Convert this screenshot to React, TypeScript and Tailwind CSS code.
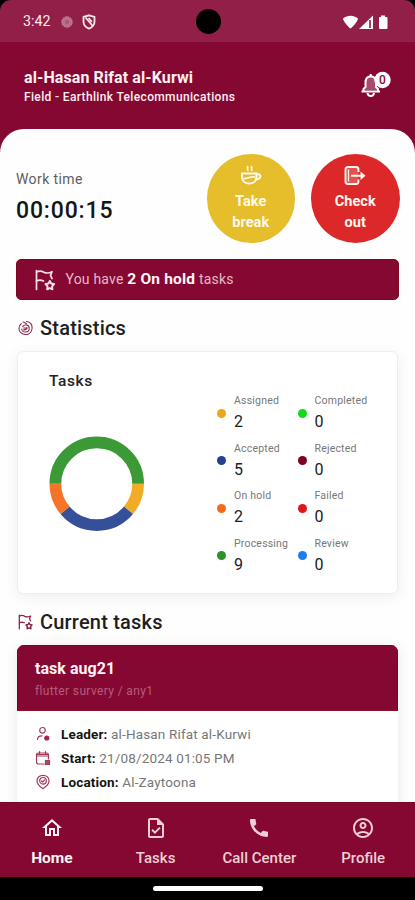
// src/App.tsx
import type { ReactNode } from 'react'
import {
  MdCall,
  MdOutlineAccountCircle,
  MdOutlineHome,
  MdOutlineTask,
} from 'react-icons/md'

const stats = [
  { label: 'Assigned', value: 2, color: '#eca51f' },
  { label: 'Completed', value: 0, color: '#12d81f' },
  { label: 'Accepted', value: 5, color: '#24428f' },
  { label: 'Rejected', value: 0, color: '#7d0320' },
  { label: 'On hold', value: 2, color: '#f26c1c' },
  { label: 'Failed', value: 0, color: '#e01619' },
  { label: 'Processing', value: 9, color: '#2a9228' },
  { label: 'Review', value: 0, color: '#1c7ff0' },
]

// clockwise from the right hand side
const slices = [
  { value: 2, color: '#f0ab27' },
  { value: 5, color: '#364f99' },
  { value: 2, color: '#f4752a' },
  { value: 9, color: '#3c9a36' },
]

const tabs = [
  { label: 'Home', icon: MdOutlineHome, active: true },
  { label: 'Tasks', icon: MdOutlineTask, active: false },
  { label: 'Call Center', icon: MdCall, active: false },
  { label: 'Profile', icon: MdOutlineAccountCircle, active: false },
]

function FlagStarIcon({ className }: { className?: string }) {
  return (
    <svg viewBox="0 0 20 22" fill="none" stroke="currentColor" strokeWidth="1.7" strokeLinejoin="round" strokeLinecap="round" className={className}>
      <path d="M1.5 20.5V1.5" />
      <path d="M1.5 3C4 1.6 6.5 1.8 9 3.2C11.5 4.5 14 4.2 17 2.7L15.5 6.5L17 9.5" />
      <path d="M1.5 12C4 10.6 6 10.7 8.5 12" />
      <path d="M14.8 12L16.100 14.4L19 15L17.100 17.3L17.400 20.3L14.800 19.1L12.200 20.3L12.500 17.300L10.600 15L13.500 14.4Z" strokeWidth="2" />
    </svg>
  )
}

function StatusBar() {
  return (
    <div className="relative bg-black">
      <div className="flex h-[42px] items-center rounded-t-[11px] bg-[#921f48] pl-[23px] pr-[27px] pt-[2px] text-[#fbe9ee]">
        <span className="text-[14.2px]">3:42</span>
        <svg viewBox="0 0 14 14" className="ml-[10px] h-[14px] w-[14px]">
          <circle cx="7" cy="7" r="5.3" fill="#b8708a" />
          <circle cx="7" cy="7" r="5.3" fill="none" stroke="#c98fa3" strokeDasharray="1.5 1" />
          <circle cx="7" cy="7" r="2" fill="#a8557a" />
        </svg>
        <svg viewBox="0 0 14 16" fill="none" stroke="currentColor" strokeWidth="1.8" className="ml-[8px] h-[16px] w-[14px]">
          <path d="M7 1.3L12.5 3V7.5C12.5 11 10 13.5 7 14.6C4 13.5 1.5 11 1.5 7.5V3Z" />
          <path d="M3.5 3.500L10.800 12" />
          <path d="M6.500 4L9.800 7.800" />
        </svg>
        <svg viewBox="0 0 46 15" fill="#fff" className="ml-auto h-[15px] w-[46px]">
          <path d="M1 3.500C5.500 -.3 11.500 -.3 16 3.500C16 5.500 11 12 8.500 13.500C6 12 1 5.500 1 3.500Z" />
          <path d="M31 .5V14H17Z" />
          <path d="M27 5H29V13H27Z" fill="#a04265" />
          <path d="M39 .5H43V2H44.500Q45.500 2 45.500 3V13Q45.500 14 44.500 14H38Q37 14 37 13V3Q37 2 38 2H39Z" />
        </svg>
      </div>
      <div className="absolute left-[195.5px] top-[9px] h-[25px] w-[25px] rounded-full bg-black" />
    </div>
  )
}

function Header() {
  return (
    <header className="flex h-[87px] justify-between pl-6 pr-[24px] pt-[25px] text-[#fdeef1]">
      <div>
        <h1 className="text-[16px] leading-[21px] font-bold tracking-[0.1px]">al-Hasan Rifat al-Kurwi</h1>
        <p className="text-[12px] leading-[19px] font-medium tracking-[0.35px]">Field - Earthlink Telecommunications</p>
      </div>
      <svg viewBox="0 0 32 30" className="mt-[2px] h-[30px] w-[32px]" fill="none" stroke="#fff">
        <path d="M6.5 18V13.5C6.5 10 8.3 7.5 11.7 7.2C15 7.5 17 10 17 13.5V18L19 21H4.5Z" fill="#a84a6c" stroke="none" />
        <path d="M2.500 22.500H21M4.500 22V20L6.500 18V13.5C6.5 10 8.3 7.5 11.7 7.2C15 7.5 17 10 17 13.500V18L19 20V22" strokeWidth="2" />
        <path d="M11.700 5V7.500M8.500 24C9 28 14.500 28 15 24" strokeWidth="2" />
        <circle cx="23.500" cy="11" r="8.200" fill="#fff" stroke="none" />
        <text x="23.500" y="15.300" textAnchor="middle" fontSize="12" fontWeight="500" fill="#850832" stroke="none">0</text>
      </svg>
    </header>
  )
}

function RoundButton({ className, icon, children }: { className: string; icon: ReactNode; children: ReactNode }) {
  return (
    <button className={`flex h-[89px] w-[88.5px] flex-col items-center rounded-full pt-[11px] text-center text-[14.5px] leading-[21px] font-bold tracking-[0.1px] text-[#fff8ee] ${className}`}>
      {icon}
      <span className="mt-[4px]">{children}</span>
    </button>
  )
}

function WorkTime() {
  return (
    <section className="flex justify-between">
      <div className="pt-[15px]">
        <p className="text-[14px] leading-[20px] tracking-[0.4px] text-[#5d5d5d]">Work time</p>
        <p className="mt-[6px] text-[23px] leading-[32px] font-medium tracking-[0.85px] text-[#151515]">00:00:15</p>
      </div>
      <div className="-mr-[0.5px] flex gap-4">
        <RoundButton
          className="bg-[#e6bd2a]"
          icon={
            <svg viewBox="0 0 22 22" fill="none" stroke="currentColor" strokeWidth="2" strokeLinecap="round" className="h-[22px] w-[22px]">
              <path d="M2 8.500H16.500V12C16.500 16 13.500 18.500 9.300 18.500S2 16 2 12Z" />
              <path d="M16.500 9.500C22 8 21.500 14 16 14.500" />
              <path d="M4 13.500C7 14.500 10 11 14.500 12" strokeWidth="1.600" />
              <path d="M8 5.500C6.500 4 8.500 3.500 7.500 1.500M12 5.500C10.500 4 12.500 3.500 11.500 1.500" strokeWidth="1.600" />
            </svg>
          }
        >
          Take<br />break
        </RoundButton>
        <RoundButton
          className="bg-[#dc2828]"
          icon={
            <svg viewBox="0 0 22 22" fill="none" stroke="currentColor" strokeWidth="1.9" className="h-[22px] w-[22px]">
              <path d="M14.500 7V4.500Q14.500 2 12 2H4Q1.500 2 1.500 4.500V16.500Q1.500 19 4 19H12Q14.500 19 14.500 16.500V14.500" fill="currentColor" fillOpacity="0.2" />
              <path d="M4.500 4.500V16.500" strokeWidth="1.300" />
              <path d="M7 10.700H18" />
              <path d="M16.500 6.500L21.500 10.700L16.500 14.900Z" fill="currentColor" stroke="none" />
            </svg>
          }
        >
          Check<br />out
        </RoundButton>
      </div>
    </section>
  )
}

function SectionTitle({ icon, children }: { icon: ReactNode; children: ReactNode }) {
  return (
    <div className="flex items-center gap-[7px] pl-[2px] text-[#8e2045]">
      {icon}
      <h2 className="text-[20px] leading-[24px] font-medium tracking-[0.2px] text-[#1c1f22]">{children}</h2>
    </div>
  )
}

function Donut() {
  const total = slices.reduce((sum, s) => sum + s.value, 0)
  let start = 0
  return (
    <svg viewBox="0 0 96 96" className="h-[95.5px] w-[95.5px]" fill="none" strokeWidth="11.8">
      {slices.map((s, i) => {
        const offset = start
        start += s.value
        return (
          <circle
            key={i}
            cx="48"
            cy="48"
            r="41.6"
            stroke={s.color}
            pathLength={total}
            strokeDasharray={`${s.value} ${total - s.value}`}
            strokeDashoffset={-offset}
          />
        )
      })}
    </svg>
  )
}

function StatisticsCard() {
  return (
    <section className="mx-px flex h-[243px] rounded-[6px] border border-[#eceeef] bg-white shadow-[0_3px_14px_rgba(60,80,90,0.09)]">
      <div className="w-[199px] pl-[31px] pt-[18px]">
        <h3 className="text-[15.5px] leading-[22px] font-medium tracking-[0.6px] text-[#222]">Tasks</h3>
        <div className="mt-[44px]">
          <Donut />
        </div>
      </div>
      <div className="grid h-[231px] grid-cols-[80.5px_80px] grid-rows-4 pt-[41px]">
        {stats.map((s) => (
          <div key={s.label} className="flex h-[47.5px] gap-[8px]">
            <span className="mt-[15.5px] h-[9px] w-[9px] shrink-0 rounded-full" style={{ backgroundColor: s.color }} />
            <div className="whitespace-nowrap">
              <p className="text-[10.5px] leading-[16px] tracking-[0.2px] text-[#777]">{s.label}</p>
              <p className="mt-[2px] text-[16px] leading-[21px] text-[#202020]">{s.value}</p>
            </div>
          </div>
        ))}
      </div>
    </section>
  )
}

function InfoRow({ icon, label, value }: { icon: ReactNode; label: string; value: string }) {
  return (
    <div className="flex h-[24px] items-center">
      <svg viewBox="0 0 16 16" fill="none" stroke="#a23a5a" strokeWidth="1.2" strokeLinecap="round" strokeLinejoin="round" className="mr-[10px] h-4 w-4">
        {icon}
      </svg>
      <p className="text-[13.5px] tracking-[0.16px] text-[#777]">
        <span className="font-bold text-[#151515]">{label}</span> {value}
      </p>
    </div>
  )
}

function TaskCard() {
  return (
    <section className="mx-px h-[180px] overflow-hidden rounded-t-[7px] bg-white shadow-[0_2px_12px_rgba(60,80,90,0.13)]">
      <div className="h-[66px] border border-[#7c0520] border-b-[#8c1029] bg-[#850832] pl-[17px] pt-[13px]">
        <h3 className="text-[16px] leading-[20px] font-bold tracking-[0.05px] text-[#fff2f2]">task aug21</h3>
        <p className="mt-[3px] text-[12px] leading-[18px] tracking-[0.36px] text-[#b65c7d]">flutter survery / any1</p>
      </div>
      <div className="pl-[18px] pt-[11px]">
        <InfoRow
          label="Leader:"
          value="al-Hasan Rifat al-Kurwi"
          icon={
            <>
              <circle cx="7.5" cy="4.3" r="2.8" />
              <path d="M2.5 13.5C2.5 11 4.5 9.8 7 9.8" />
              <circle cx="11.8" cy="12" r="2" fill="#a82047" stroke="#a82047" />
            </>
          }
        />
        <InfoRow
          label="Start:"
          value="21/08/2024 01:05 PM"
          icon={
            <>
              <path d="M9 14H3.5Q1.5 14 1.5 12V5Q1.5 3 3.5 3H11.5Q13.5 3 13.5 5V9M1.5 6H13.5M4.5 1.5V4M10.5 1.5V4" />
              <path d="M2 4.500H13" />
              <path d="M10.5 10.5H14.5V14.5H10.5Z" fill="#b34866" />
            </>
          }
        />
        <InfoRow
          label="Location:"
          value="Al-Zaytoona"
          icon={
            <>
              <path d="M8 14.7C4.5 12.5 2 10 2 6.8C2 3.5 4.7 1.3 8 1.3S14 3.5 14 6.8C14 10 11.5 12.5 8 14.7Z" />
              <circle cx="8" cy="6.8" r="3.3" />
              <path d="M6.5 7L7.7 8L9.5 6" />
            </>
          }
        />
      </div>
    </section>
  )
}

function BottomNav() {
  return (
    <nav className="shrink-0 bg-black">
      <div className="flex h-[74.5px] border-t border-[#7a0822] bg-[#850832]">
        {tabs.map(({ label, icon: Icon, active }) => (
          <div key={label} className={`flex flex-1 flex-col items-center pt-[13px] ${active ? 'text-[#fff2f2]' : 'text-[#f0ced5]'}`}>
            <Icon className="h-6 w-6" />
            <span className={`mt-[7px] leading-[22px] ${active ? 'text-[15.5px] font-bold' : 'text-[15px] font-medium'}`}>{label}</span>
          </div>
        ))}
      </div>
      <div className="flex h-[23.5px] justify-center pt-[9.5px]">
        <div className="h-[5px] w-[110px] rounded-full bg-white" />
      </div>
    </nav>
  )
}

export default function App() {
  return (
    <div className="flex h-[900px] w-[415px] flex-col overflow-hidden bg-[#850832] font-['Roboto',sans-serif]">
      <StatusBar />
      <Header />
      <main className="min-h-0 flex-1 overflow-hidden rounded-t-[24px] bg-[#fefefe] px-4 pt-[25px]">
        <WorkTime />
        <div className="mt-4 flex h-[41px] items-center rounded-[5px] border border-[#7c0520] bg-[#850832] pl-[18px] text-[14px] tracking-[0.2px] text-[#e5b9c5]">
          <FlagStarIcon className="mr-[10.5px] h-[22px] w-[20px] text-[#f9dfe4]" />
          <p>
            You have <span className="text-[15.5px] font-bold text-[#fff3f3]">2 On hold</span> tasks
          </p>
        </div>
        <div className="mt-[16px]">
          <SectionTitle
            icon={
              <svg viewBox="0 0 16 16" fill="none" stroke="currentColor" strokeWidth="1.1" strokeLinecap="round" className="h-[16px] w-[15px]">
                <path d="M9 1C13 1.5 15.3 4.5 15 8.5C14.5 12.5 11.5 15 8 15C4 15 1 12 1 8.5C1 6.5 2 4.5 3.5 3.5" />
                <path d="M5 6.5C7 3.5 12 4.5 12 8.5C12 11 10 12.3 8 12.3C5.5 12.3 4 10.5 4 9" />
                <path d="M6 8H10M6 10C8 10 9.5 9.5 9.5 7.5M5.5 1.5L9 3.5" />
              </svg>
            }
          >
            Statistics
          </SectionTitle>
        </div>
        <div className="mt-[11px]">
          <StatisticsCard />
        </div>
        <div className="mb-[11px] mt-[16px]">
          <SectionTitle icon={<FlagStarIcon className="h-[16px] w-[15px]" />}>Current tasks</SectionTitle>
        </div>
        <TaskCard />
      </main>
      <BottomNav />
    </div>
  )
}
